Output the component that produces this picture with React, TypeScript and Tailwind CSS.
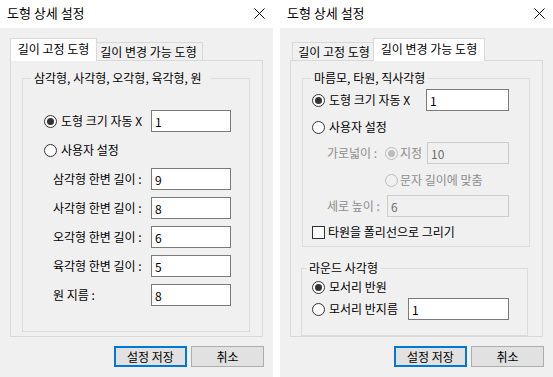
import React from 'react'

const Radio = ({ checked = false, disabled = false }: { checked?: boolean; disabled?: boolean }) => (
  <span
    className={`flex h-[13px] w-[13px] shrink-0 items-center justify-center rounded-full border ${
      disabled ? 'border-[#bcbcbc] bg-[#f0f0f0]' : 'border-[#333333] bg-white'
    }`}
  >
    {checked && <span className={`h-[7px] w-[7px] rounded-full ${disabled ? 'bg-[#bcbcbc]' : 'bg-[#333333]'}`} />}
  </span>
)

const Field = ({ value, width, disabled = false }: { value: string; width: string; disabled?: boolean }) => (
  <input
    readOnly
    value={value}
    disabled={disabled}
    className={`h-[22px] ${width} border px-[3px] text-[12px] outline-none ${
      disabled ? 'border-[#cccccc] bg-[#f0f0f0] text-[#6d6d6d]' : 'border-[#7a7a7a] bg-white text-black'
    }`}
  />
)

const Tabs = ({ active }: { active: number }) => {
  const tabs = [
    { label: '길이 고정 도형', w: 'w-[83px]', wa: 'w-[87px]' },
    { label: '길이 변경 가능 도형', w: 'w-[108px]', wa: 'w-[112px]' },
  ]
  return (
    <div className="flex h-[22px] items-end pl-[12px]">
      {tabs.map((t, i) =>
        i === active ? (
          <div
            key={i}
            className={`relative z-10 -mx-[2px] -mb-[1px] flex h-[23px] ${t.wa} items-center justify-center border border-b-0 border-[#d9d9d9] bg-white pb-[2px]`}
          >
            {t.label}
          </div>
        ) : (
          <div
            key={i}
            className={`flex h-[18px] ${t.w} items-center justify-center border border-b-0 border-[#d9d9d9] bg-[#f0f0f0] ${
              i === 0 ? '' : 'border-l-0'
            } ${i === 0 && active === 1 ? 'border-r-0' : ''}`}
          >
            {t.label}
          </div>
        )
      )}
    </div>
  )
}

const Dialog = ({ active, children }: { active: number; children: React.ReactNode }) => (
  <div className="flex h-[377px] w-[273px] shrink-0 flex-col">
    {/* title bar */}
    <div className="flex h-[28px] items-center justify-between bg-white pb-[2px] pl-[7px] pr-[8px] text-[13px]">
      <span>도형 상세 설정</span>
      <svg width="11" height="11" viewBox="0 0 11 11">
        <path d="M0.5 0.5 L10.5 10.5 M10.5 0.5 L0.5 10.5" stroke="#000" strokeWidth="1" />
      </svg>
    </div>

    <div className="flex flex-1 flex-col bg-[#f0f0f0] pt-[10px]">
      <Tabs active={active} />
      <div className="mx-[10px] h-[277px] border border-[#d9d9d9]">{children}</div>

      <div className="mt-[9px] flex justify-end gap-[4px] pr-[9px]">
        <button className="flex h-[21px] w-[73px] items-center justify-center border-2 border-[#0078d7] bg-[#e1e1e1]">
          설정 저장
        </button>
        <button className="flex h-[21px] w-[73px] items-center justify-center border border-[#adadad] bg-[#e1e1e1]">
          취소
        </button>
      </div>
    </div>
  </div>
)

const FixedPanel = () => {
  const rows = [
    ['삼각형 한변 길이 :', '9'],
    ['사각형 한변 길이 :', '8'],
    ['오각형 한변 길이 :', '6'],
    ['육각형 한변 길이 :', '5'],
    ['원 지름 :', '8'],
  ]
  return (
    <fieldset className="ml-[11px] mt-[9px] h-[262px] w-[228px] border border-[#dcdcdc]">
      <legend className="ml-[8px] pl-[3px] pr-[9px] leading-[16px]">삼각형, 사각형, 오각형, 육각형, 원</legend>
      <div className="flex h-[22px] items-center mt-[24px]">
        <div className="flex w-[128px] items-center gap-[4px] pl-[21px]">
          <Radio checked />
          <span>도형 크기 자동 X</span>
        </div>
        <Field value="1" width="w-[80px]" />
      </div>
      <div className="mt-[7px] flex h-[22px] items-center gap-[4px] pl-[21px]">
        <Radio />
        <span>사용자 설정</span>
      </div>
      {rows.map(([label, v]) => (
        <div key={label} className="mt-[7px] flex h-[22px] items-center">
          <span className="w-[128px] pl-[30px]">{label}</span>
          <Field value={v} width="w-[80px]" />
        </div>
      ))}
    </fieldset>
  )
}

const VariablePanel = () => (
  <div className="flex flex-col">
    <fieldset className="ml-[11px] mt-[9px] h-[177px] w-[228px] border border-[#dcdcdc]">
      <legend className="ml-[8px] px-[3px] leading-[16px]">마름모, 타원, 직사각형</legend>
      <div className="mt-[3px] flex h-[22px] items-center">
        <div className="flex w-[123px] items-center gap-[4px] pl-[9px]">
          <Radio checked />
          <span>도형 크기 자동 X</span>
        </div>
        <Field value="1" width="w-[83px]" />
      </div>
      <div className="mt-[5px] flex h-[22px] items-center gap-[4px] pl-[9px]">
        <Radio />
        <span>사용자 설정</span>
      </div>
      <div className="mt-[4px] flex h-[22px] items-center text-[#8d8d8d]">
        <span className="w-[82px] pl-[24px]">가로넓이 :</span>
        <div className="flex w-[42px] items-center gap-[2px]">
          <Radio checked disabled />
          <span>지정</span>
        </div>
        <Field value="10" width="w-[82px]" disabled />
      </div>
      <div className="mt-[5px] flex h-[22px] items-center gap-[2px] pl-[82px] text-[#8d8d8d]">
        <Radio disabled />
        <span>문자 길이에 맞춤</span>
      </div>
      <div className="mt-[4px] flex h-[22px] items-center text-[#8d8d8d]">
        <span className="w-[84px] pl-[24px]">세로 높이 :</span>
        <Field value="6" width="w-[122px]" disabled />
      </div>
      <div className="mt-[7px] flex h-[16px] items-center gap-[3px] pl-[9px]">
        <span className="h-[13px] w-[13px] shrink-0 border border-[#333333] bg-white" />
        <span>타원을 폴리선으로 그리기</span>
      </div>
    </fieldset>

    <fieldset className="ml-[10px] mt-[13px] h-[76px] w-[227px] border border-[#dcdcdc]">
      <legend className="ml-[4px] px-[3px] leading-[16px]">라운드 사각형</legend>
      <div className="mt-[1px] flex h-[20px] items-center gap-[4px] pl-[10px]">
        <Radio checked />
        <span>모서리 반원</span>
      </div>
      <div className="mt-[1px] flex h-[22px] items-center">
        <div className="flex w-[106px] items-center gap-[4px] pl-[10px]">
          <Radio />
          <span>모서리 반지름</span>
        </div>
        <Field value="1" width="w-[101px]" />
      </div>
    </fieldset>
  </div>
)

export default function App() {
  return (
    <div className="flex h-[377px] w-[553px] gap-[7px] bg-white font-['Noto_Sans_CJK_KR','Noto_Sans',sans-serif] text-[12px] text-black">
      <Dialog active={0}>
        <FixedPanel />
      </Dialog>
      <Dialog active={1}>
        <VariablePanel />
      </Dialog>
    </div>
  )
}
